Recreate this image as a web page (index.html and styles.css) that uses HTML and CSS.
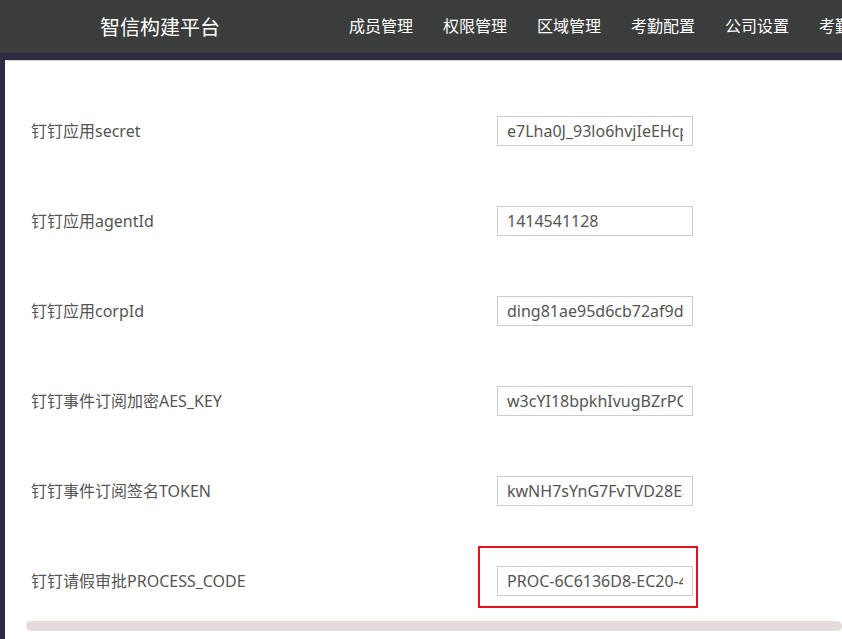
FILE: index.html
```html
<!DOCTYPE html>
<html lang="zh">
<head>
<meta charset="utf-8">
<link rel="stylesheet" href="styles.css">
</head>
<body>
<header class="topbar">
  <div class="brand">智信构建平台</div>
  <nav class="nav">
    <a>成员管理</a>
    <a>权限管理</a>
    <a>区域管理</a>
    <a>考勤配置</a>
    <a>公司设置</a>
    <a>考勤统计</a>
  </nav>
</header>
<div class="frame">
  <main class="panel">
    <div class="rows">
      <div class="row"><label class="label">钉钉应用secret</label><div class="field"><input class="input" value="e7Lha0J_93lo6hvjIeEHcpQ"></div></div>
      <div class="row"><label class="label">钉钉应用agentId</label><div class="field"><input class="input" value="1414541128"></div></div>
      <div class="row"><label class="label">钉钉应用corpId</label><div class="field"><input class="input" value="ding81ae95d6cb72af9d35c2f4657eb6378f"></div></div>
      <div class="row"><label class="label">钉钉事件订阅加密AES_KEY</label><div class="field"><input class="input" value="w3cYI18bpkhIvugBZrPGabc"></div></div>
      <div class="row"><label class="label">钉钉事件订阅签名TOKEN</label><div class="field"><input class="input" value="kwNH7sYnG7FvTVD28Eabc"></div></div>
      <div class="row"><label class="label">钉钉请假审批PROCESS_CODE</label><div class="field highlighted"><input class="input" value="PROC-6C6136D8-EC20-4B5F"><span class="mark"></span></div></div>
    </div>
    <div class="hscroll"></div>
  </main>
</div>
</body>
</html>
```
FILE: styles.css
```css
html, body {
  margin: 0;
  padding: 0;
  height: 100%;
  overflow: hidden;
  background: #2d2b41;
  font-family: "Noto Sans", "Noto Sans CJK SC", sans-serif;
}
.topbar {
  height: 53px;
  background: #3b3d3d;
  display: flex;
  align-items: center;
  white-space: nowrap;
  overflow: hidden;
}
.brand {
  color: #fff;
  font-size: 20px;
  margin-left: 100px;
  width: 249px;
  flex-shrink: 0;
  font-family: "Noto Sans CJK SC", sans-serif;
}
.nav {
  display: flex;
  gap: 30px;
  flex-shrink: 0;
  font-family: "Noto Sans CJK SC", sans-serif;
}
.nav a {
  color: #fff;
  font-size: 16px;
  margin-top: -4px;
}
.frame {
  padding: 7px 0 0 5px;
  height: calc(100% - 60px);
}
.panel {
  background: #fff;
  border-top: 1px solid #d6d6d6;
  height: 100%;
  box-sizing: border-box;
  overflow: hidden;
}
.rows {
  padding: 40px 0 0 26px;
  display: flex;
  flex-direction: column;
  gap: 30px;
}
.row {
  height: 60px;
  display: flex;
  align-items: center;
}
.label {
  width: 466px;
  color: #555;
  font-size: 16px;
  padding-bottom: 2px;
}
.field {
  position: relative;
}
.input {
  width: 196px;
  height: 30px;
  box-sizing: border-box;
  border: 1px solid #cccccc;
  padding: 0 9px;
  color: #555;
  font-size: 16px;
  font-family: "Noto Sans", "Noto Sans CJK SC", sans-serif;
  outline: none;
  display: block;
}
.mark {
  position: absolute;
  left: -19px;
  top: -20px;
  width: 220px;
  height: 62px;
  border: 2px solid #e8101a;
  box-sizing: border-box;
}
.hscroll {
  margin: 10px 0 0 21px;
  height: 10px;
  border-radius: 5px;
  background: #e5dbdb;
}
```
